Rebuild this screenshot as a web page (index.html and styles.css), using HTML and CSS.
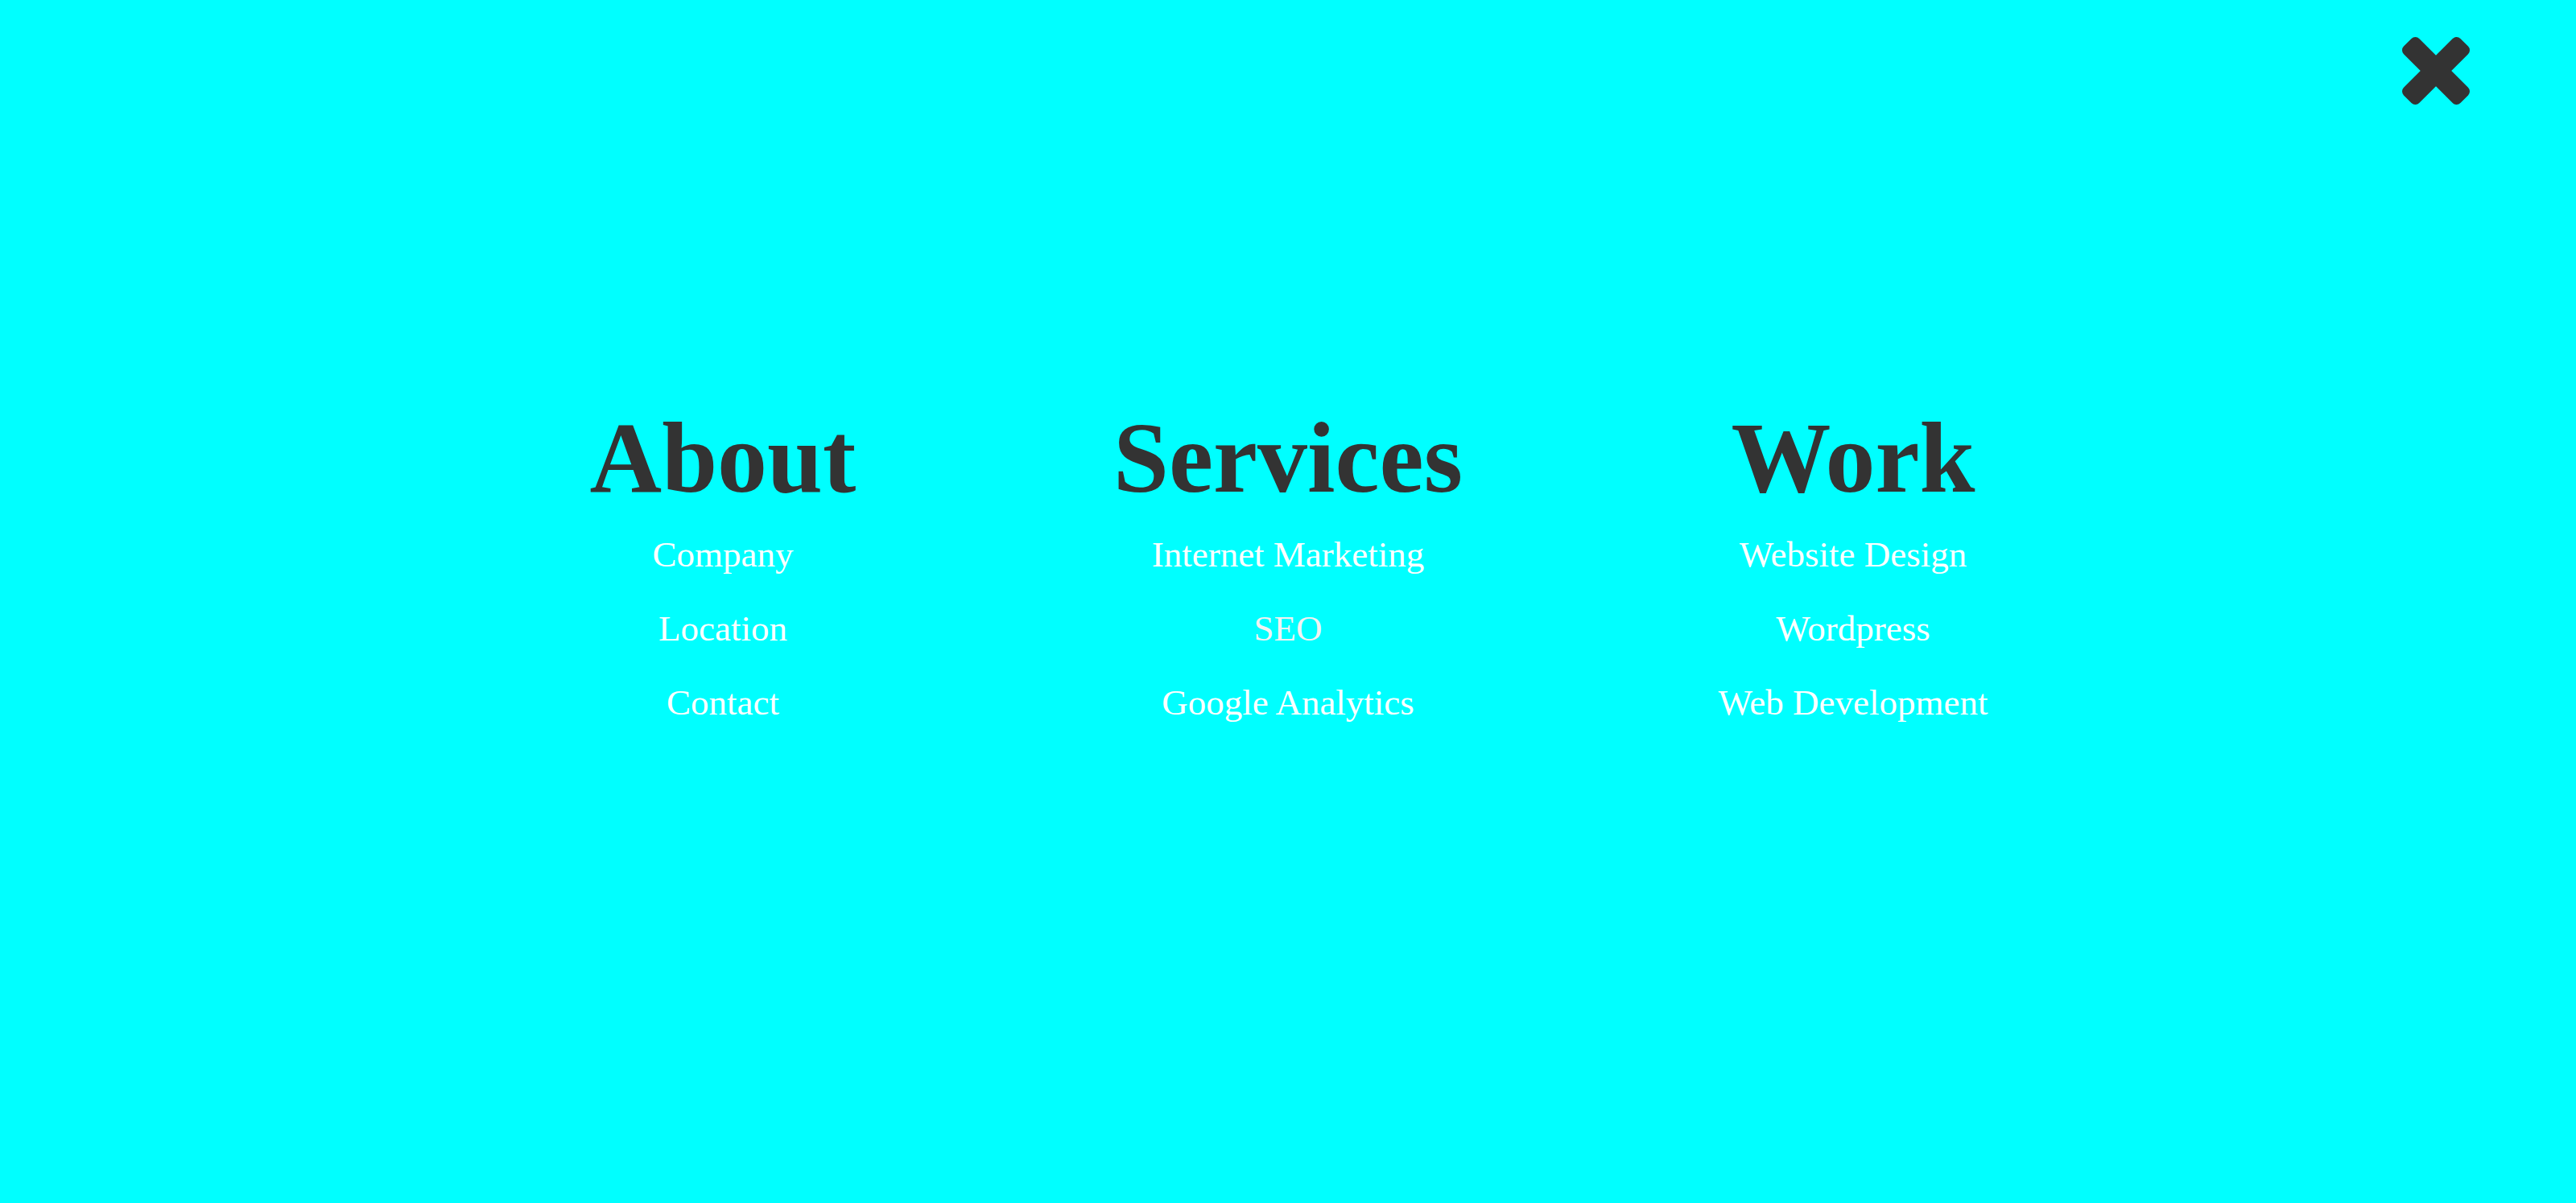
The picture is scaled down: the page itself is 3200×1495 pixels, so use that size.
FILE: index.html
```html
<!DOCTYPE html>
<html lang="en">
<head>
<meta charset="utf-8">
<title>Menu</title>
<link rel="stylesheet" href="styles.css">
</head>
<body>
<div class="overlay">
  <button class="close" aria-label="Close">
    <svg class="close-icon" viewBox="302 366 1188 1188" xmlns="http://www.w3.org/2000/svg"><path d="M1490 1322q0 40-28 68l-136 136q-28 28-68 28t-68-28l-294-294-294 294q-28 28-68 28t-68-28l-136-136q-28-28-28-68t28-68l294-294-294-294q-28-28-28-68t28-68l136-136q28-28 68-28t68 28l294 294 294-294q28-28 68-28t68 28l136 136q28 28 28 68t-28 68l-294 294 294 294q28 28 28 68z"/></svg>
  </button>
  <nav class="menu">
    <section class="col">
      <h2 class="col-title">About</h2>
      <ul class="links">
        <li><a class="link" href="#">Company</a></li>
        <li><a class="link" href="#">Location</a></li>
        <li><a class="link" href="#">Contact</a></li>
      </ul>
    </section>
    <section class="col">
      <h2 class="col-title">Services</h2>
      <ul class="links">
        <li><a class="link" href="#">Internet Marketing</a></li>
        <li><a class="link link-hover" href="#">SEO</a></li>
        <li><a class="link" href="#">Google Analytics</a></li>
      </ul>
    </section>
    <section class="col">
      <h2 class="col-title">Work</h2>
      <ul class="links">
        <li><a class="link" href="#">Website Design</a></li>
        <li><a class="link" href="#">Wordpress</a></li>
        <li><a class="link" href="#">Web Development</a></li>
      </ul>
    </section>
  </nav>
</div>
</body>
</html>
```

FILE: styles.css
```css
html, body {
  margin: 0;
  padding: 0;
  height: 100%;
}

body {
  background: #00ffff;
  font-family: "Liberation Serif", "Times New Roman", serif;
  overflow: hidden;
}

.overlay {
  position: relative;
  min-height: 100%;
  box-sizing: border-box;
  padding-top: 508px;
}

.close {
  position: absolute;
  top: 46px;
  right: 132px;
  width: 84px;
  height: 84px;
  padding: 0;
  border: 0;
  background: none;
  cursor: pointer;
}

.close-icon {
  display: block;
  width: 84px;
  height: 84px;
  fill: #333333;
}

.menu {
  display: grid;
  grid-template-columns: repeat(3, 702px);
  justify-content: center;
}

.col {
  text-align: center;
}

.col-title {
  margin: 0 0 11px;
  font-size: 124px;
  line-height: 124px;
  font-weight: bold;
  color: #333333;
}

.links {
  list-style: none;
  margin: 0;
  padding: 0;
}

.links li {
  line-height: 92px;
  font-size: 45px;
}

.link {
  color: #ffffff;
  text-decoration: none;
}

.link-hover {
  color: #f2f2f2;
}
```
